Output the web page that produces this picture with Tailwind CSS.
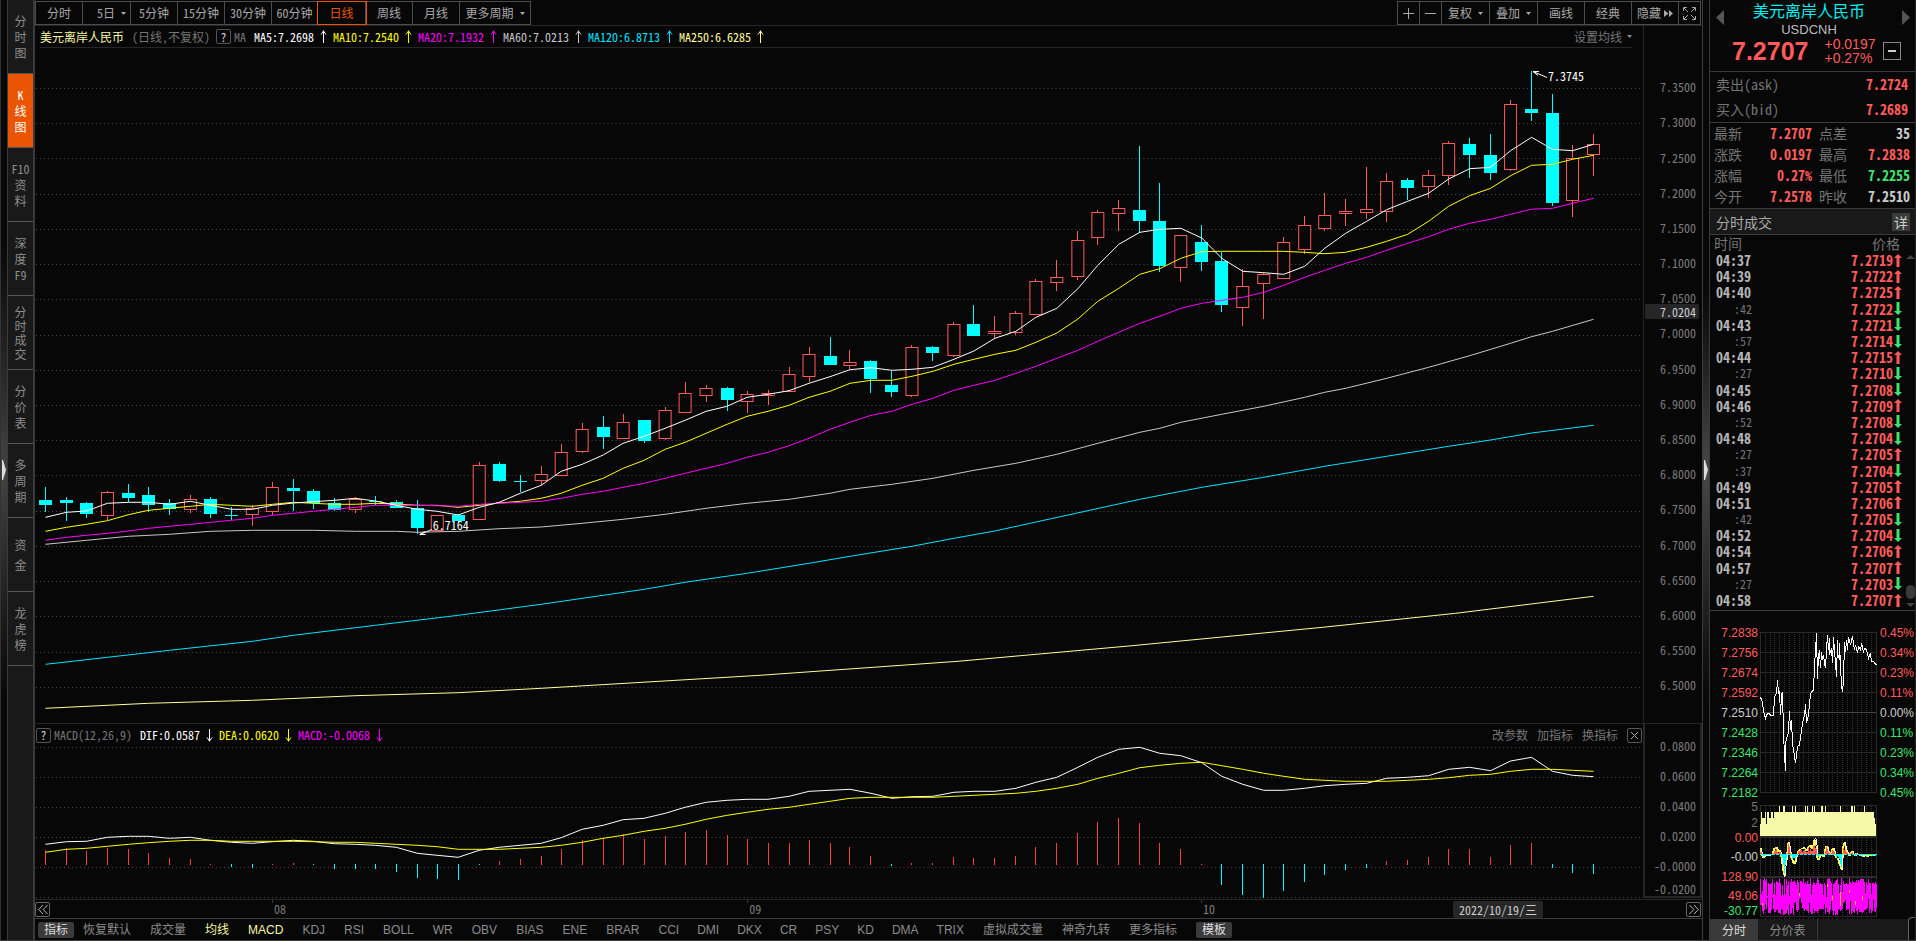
<!DOCTYPE html>
<html lang="zh-CN">
<head>
<meta charset="utf-8">
<title>美元离岸人民币 USDCNH</title>
<script src="https://cdn.jsdelivr.net/npm/@tailwindcss/browser@4"></script>
</head>
<body class="h-screen min-h-[720px] overflow-hidden bg-[#070707] font-['Noto_Sans_CJK_SC',sans-serif] text-[12px] leading-4 text-[#a8a8a8]">
<div class="flex h-full border-b border-[#3a3a3a] [font-feature-settings:'hwid']">

  <!-- left handle -->
  <div class="flex w-[7px] shrink-0 items-center border-l border-[#333] bg-linear-to-b from-[#070707] from-25% via-[#444] via-50% to-[#070707] to-75%">
    <svg class="ml-px h-5 w-1" viewBox="0 0 4 20" fill="#ddd"><path d="M0 0h1L4 10L1 20H0z"/></svg>
  </div>

  <!-- side navigation -->
  <nav class="flex w-7 shrink-0 flex-col border-r-2 border-l border-[#3a3a3a] bg-[#191919] text-[#8c8c8c]" aria-label="视图">
    <button class="h-[74px] border-b border-[#555] text-center leading-4">分<br>时<br>图</button>
    <button class="h-[74px] border-b border-[#555] bg-[#eb5502] text-center leading-4 text-white">K<br>线<br>图</button>
    <button class="h-[74px] border-b border-[#555] text-center leading-4">F10<br>资<br>料</button>
    <button class="h-[74px] border-b border-[#555] text-center leading-4">深<br>度<br>F9</button>
    <button class="h-[74px] border-b border-[#555] text-center leading-[14px]">分<br>时<br>成<br>交</button>
    <button class="h-[74px] border-b border-[#555] text-center leading-4">分<br>价<br>表</button>
    <button class="h-[74px] border-b border-[#555] text-center leading-4">多<br>周<br>期</button>
    <button class="h-[74px] border-b border-[#555] text-center leading-5">资<br>金</button>
    <button class="h-[74px] border-b border-[#555] text-center leading-4">龙<br>虎<br>榜</button>
  </nav>

  <!-- chart side -->
  <main class="flex min-w-0 flex-1 flex-col">
    <div class="flex h-[25px] shrink-0 items-start justify-between pt-px">
      <div class="flex h-6 divide-x divide-[#4c4c4c] border border-[#4c4c4c]">
        <button class="w-[47px]">分时</button>
        <button class="flex w-12 items-center justify-end gap-[6px] pr-1">5日<svg class="h-[3px] w-[5px]" viewBox="0 0 5 3" fill="#a8a8a8"><path d="M0 0h5L2.500 3z"/></svg></button>
        <button class="w-[47px]">5分钟</button>
        <button class="w-[47px]">15分钟</button>
        <button class="w-[47px]">30分钟</button>
        <button class="w-[46px]">60分钟</button>
        <button class="w-12 text-[#eb5502] outline outline-[#eb5502]">日线</button>
        <button class="w-[47px]">周线</button>
        <button class="w-[47px]">月线</button>
        <button class="flex w-[70px] items-center justify-center gap-[6px]">更多周期<svg class="h-[3px] w-[5px]" viewBox="0 0 5 3" fill="#a8a8a8"><path d="M0 0h5L2.500 3z"/></svg></button>
      </div>
      <div class="mr-px flex h-6 divide-x divide-[#4c4c4c] border border-[#4c4c4c]">
        <button class="flex w-[22px] items-center justify-center" aria-label="放大"><svg class="size-[11px]" viewBox="0 0 11 11" stroke="#a8a8a8" shape-rendering="crispEdges"><path d="M0 5.500h11M5.500 0v11"/></svg></button>
        <button class="flex w-[22px] items-center justify-center" aria-label="缩小"><svg class="size-[11px]" viewBox="0 0 11 11" stroke="#a8a8a8" shape-rendering="crispEdges"><path d="M0 5.500h11"/></svg></button>
        <button class="flex w-12 items-center justify-center gap-[6px]">复权<svg class="h-[3px] w-[5px]" viewBox="0 0 5 3" fill="#a8a8a8"><path d="M0 0h5L2.500 3z"/></svg></button>
        <button class="flex w-12 items-center justify-center gap-[6px]">叠加<svg class="h-[3px] w-[5px]" viewBox="0 0 5 3" fill="#a8a8a8"><path d="M0 0h5L2.500 3z"/></svg></button>
        <button class="w-[47px]">画线</button>
        <button class="w-[47px]">经典</button>
        <button class="flex w-[47px] items-center justify-center gap-[3px]">隐藏<svg class="h-[7px] w-[9px]" viewBox="0 0 9 7" fill="#a8a8a8"><path d="M0 0L4.500 3.500L0 7zM5 0L9 3.500L5 7z"/></svg></button>
        <button class="flex w-[21px] items-center justify-center" aria-label="全屏"><svg class="size-[13px]" viewBox="0 0 13 13" fill="none" stroke="#a8a8a8"><path d="M0.500 4V0.500H4M9 0.500h3.500V4M12.500 9v3.500H9M4 12.500H0.500V9M1 1l4 4M12 1L8 5M12 12L8 8M1 12l4-4"/></svg></button>
      </div>
    </div>

    <!-- price chart -->
    <section class="flex min-h-0 flex-1 border-t border-[#262626]">
      <div class="flex min-w-0 flex-1 flex-col border-r border-[#262626]">
        <header class="mr-[11px] ml-[5px] flex h-[22px] shrink-0 items-center border-b border-[#262626] whitespace-nowrap">
          <h1 class="text-[#f6f9a5]">美元离岸人民币</h1>
          <span class="ml-2 w-[84px] text-[#757575]">（日线,不复权）</span>
          <button class="mr-[3px] flex size-[15px] items-center justify-center rounded-[2px] border border-[#555] text-[#ddd]" aria-label="说明">?</button>
          <span class="mr-2 text-[#757575]">MA</span>
          <div id="ma" class="flex items-center"></div>
          <button class="ml-auto flex items-center gap-[5px] text-[#757575]">设置均线<svg class="h-[3px] w-[5px]" viewBox="0 0 5 3" fill="#8c8c8c"><path d="M0 0h5L2.500 3z"/></svg></button>
        </header>
        <svg id="kline" class="min-h-0 w-full flex-1" viewBox="35 48 1609 675" preserveAspectRatio="none" shape-rendering="crispEdges" role="img" aria-label="日K线与均线"></svg>
      </div>
      <div class="relative flex w-[58px] shrink-0 flex-col pr-[6px] text-right text-[#7c7c7c]">
        <div class="grow-[436] basis-0"></div>
        <div id="priceAxis" class="flex grow-[6336] basis-0 flex-col"></div>
        <div class="grow-[201] basis-0"></div>
        <span class="absolute top-[39.900%] left-px h-[15px] w-[54px] rounded-[2px] bg-[#262626] pr-[3px] leading-[15px] text-[#ccc]">7.0204</span>
      </div>
    </section>

    <!-- MACD -->
    <section class="flex h-[177px] shrink-0 border-y border-[#262626]">
      <div class="flex min-w-0 flex-1 flex-col">
        <header class="mr-px flex h-5 shrink-0 items-center pt-[2px] pl-px whitespace-nowrap">
          <button class="mr-[3px] flex size-[15px] items-center justify-center rounded-[2px] border border-[#555] text-[#ddd]" aria-label="说明">?</button>
          <span class="mr-2 text-[#757575]">MACD(12,26,9)</span>
          <div id="macdVals" class="flex items-center"></div>
          <div class="ml-auto flex items-center gap-[9px] text-[#757575]">
            <button>改参数</button><button>加指标</button><button>换指标</button>
            <button class="flex size-[15px] items-center justify-center rounded-[2px] border border-[#555]" aria-label="关闭"><svg class="size-[7px]" viewBox="0 0 7 7" stroke="#a8a8a8"><path d="M0 0l7 7M7 0L0 7"/></svg></button>
          </div>
        </header>
        <svg id="macd" class="min-h-0 w-full flex-1" viewBox="35 744 1609 155" preserveAspectRatio="none" shape-rendering="crispEdges" role="img" aria-label="MACD"></svg>
      </div>
      <div class="mb-px flex w-[59px] shrink-0 flex-col border-2 border-t-0 border-[#262626] pt-[7px] pr-1 text-right text-[#7c7c7c]">
        <span class="h-[30px] leading-[30px]">0.0800</span>
        <span class="h-[30px] leading-[30px]">0.0600</span>
        <span class="h-[30px] leading-[30px]">0.0400</span>
        <span class="h-[30px] leading-[30px]">0.0200</span>
        <span class="h-[30px] leading-[30px]">-0.0000</span>
        <span class="h-4">-0.0200</span>
      </div>
    </section>

    <!-- date row -->
    <div class="relative flex h-[19px] shrink-0 items-center justify-between border-b border-[#3a3a3a] pr-px text-[#7c7c7c]">
      <button class="flex size-[15px] items-center justify-center rounded-[2px] border border-[#666]" aria-label="向前"><svg class="h-[9px] w-[10px]" viewBox="0 0 10 9" fill="none" stroke="#bbb"><path d="M5 0L0.700 4.500L5 9M9.500 0L5.200 4.500L9.500 9"/></svg></button>
      <span class="absolute top-0 left-[14.220%] pl-[2px] leading-[18px] before:absolute before:top-0 before:left-0 before:h-[3px] before:w-px before:bg-[#3a3a3a]">08</span>
      <span class="absolute top-0 left-[42.730%] pl-[2px] leading-[18px] before:absolute before:top-0 before:left-0 before:h-[3px] before:w-px before:bg-[#3a3a3a]">09</span>
      <span class="absolute top-0 left-[69.950%] pl-[2px] leading-[18px] before:absolute before:top-0 before:left-0 before:h-[3px] before:w-px before:bg-[#3a3a3a]">10</span>
      <span class="absolute top-px left-[85.060%] rounded-[2px] bg-[#262626] px-[6px] leading-[17px] text-[#ccc]">2022/10/19/三</span>
      <button class="flex size-[15px] items-center justify-center rounded-[2px] border border-[#666]" aria-label="向后"><svg class="h-[9px] w-[10px]" viewBox="0 0 10 9" fill="none" stroke="#bbb"><path d="M0.500 0L4.800 4.500L0.500 9M5 0L9.300 4.500L5 9"/></svg></button>
    </div>

    <!-- indicator tabs -->
    <div class="flex h-[21px] shrink-0 items-center gap-[19px] pl-[3px] whitespace-nowrap font-['Liberation_Sans','Noto_Sans_CJK_SC',sans-serif] text-[#8c8c8c]">
      <button class="-mr-[10px] rounded-[2px] bg-[#3a3a3a] px-[6px] text-[#ddd]">指标</button>
      <button>恢复默认</button><button>成交量</button><button class="text-[#f6f9a5]">均线</button><button class="text-[#f6f9a5]">MACD</button><button>KDJ</button><button>RSI</button><button>BOLL</button><button>WR</button><button>OBV</button><button>BIAS</button><button>ENE</button><button>BRAR</button>
      <div class="flex gap-[18px]"><button>CCI</button><button>DMI</button><button>DKX</button><button>CR</button><button>PSY</button><button>KD</button><button>DMA</button><button>TRIX</button></div>
      <button>虚拟成交量</button><button>神奇九转</button><button>更多指标</button>
      <button class="rounded-[2px] bg-[#3a3a3a] px-[6px] text-[#ddd]">模板</button>
    </div>
  </main>

  <!-- splitter -->
  <div class="flex w-2 shrink-0 items-center border-x border-[#3a3a3a] bg-linear-to-b from-[#070707] from-30% via-[#484848] via-50% to-[#070707] to-75%">
    <svg class="ml-px h-5 w-1" viewBox="0 0 4 20" fill="#ddd"><path d="M0 0h1L4 10L1 20H0z"/></svg>
  </div>

  <!-- quote panel -->
  <aside class="flex w-[206px] shrink-0 flex-col border-r border-[#262626]">
    <header class="flex h-[72px] shrink-0 border-b border-[#3a3a3a]">
      <button class="mt-[10px] ml-[6px] h-[15px] w-2" aria-label="上一个"><svg class="h-[15px] w-2" viewBox="0 0 8 15" fill="#555"><path d="M8 0v15L0 7.500z"/></svg></button>
      <div class="flex flex-1 flex-col items-center">
        <h2 class="pr-5 text-[16px] leading-5 text-[#00f0f0]">美元离岸人民币</h2>
        <p class="mt-[2px] pr-5 font-['Liberation_Sans',sans-serif] text-[13px] leading-4 text-[#bbb]">USDCNH</p>
        <div class="flex h-[26px] w-full items-center font-['Liberation_Sans',sans-serif] text-[#ff5b5b]">
          <b class="ml-2 text-[25px] leading-[26px]">7.2707</b>
          <div class="ml-4 flex flex-col text-[14px] leading-[14px]"><span>+0.0197</span><span>+0.27%</span></div>
          <button class="ml-[8px] flex size-[18px] shrink-0 items-center justify-center border border-[#888]" aria-label="收起"><svg class="h-[2px] w-2" viewBox="0 0 8 2" fill="#ccc"><path d="M0 0h8v2H0z"/></svg></button>
        </div>
      </div>
      <button class="mt-[10px] mr-[5px] -ml-3 h-[15px] w-2" aria-label="下一个"><svg class="h-[15px] w-2" viewBox="0 0 8 15" fill="#555"><path d="M0 0v15L8 7.500z"/></svg></button>
    </header>
    <div class="h-[51px] shrink-0 border-b border-[#3a3a3a]">
      <table class="w-full text-[14px] leading-[25px] text-[#757575]">
        <tbody>
          <tr><th class="pl-[6px] text-left font-normal">卖出(ask)</th><td class="pr-[7px] text-right font-bold text-[#ff5b5b]">7.2724</td></tr>
          <tr><th class="pl-[6px] text-left font-normal">买入(bid)</th><td class="pr-[7px] text-right font-bold text-[#ff5b5b]">7.2689</td></tr>
        </tbody>
      </table>
    </div>
    <div class="h-[86px] shrink-0 border-b border-[#3a3a3a]">
      <table class="w-full text-[14px] leading-[21px] text-[#757575]">
        <tbody>
          <tr><th class="w-8 pl-1 text-left font-normal">最新</th><td class="w-[70px] text-right font-bold text-[#ff5b5b]">7.2707</td><th class="w-9 pl-[7px] text-left font-normal">点差</th><td class="pr-[5px] text-right font-bold text-[#ccc]">35</td></tr>
          <tr><th class="pl-1 text-left font-normal">涨跌</th><td class="text-right font-bold text-[#ff5b5b]">0.0197</td><th class="pl-[7px] text-left font-normal">最高</th><td class="pr-[5px] text-right font-bold text-[#ff5b5b]">7.2838</td></tr>
          <tr><th class="pl-1 text-left font-normal">涨幅</th><td class="text-right font-bold text-[#ff5b5b]">0.27%</td><th class="pl-[7px] text-left font-normal">最低</th><td class="pr-[5px] text-right font-bold text-[#3ce46c]">7.2255</td></tr>
          <tr><th class="pl-1 text-left font-normal">今开</th><td class="text-right font-bold text-[#ff5b5b]">7.2578</td><th class="pl-[7px] text-left font-normal">昨收</th><td class="pr-[5px] text-right font-bold text-[#ccc]">7.2510</td></tr>
        </tbody>
      </table>
    </div>
    <div class="flex h-[26px] shrink-0 items-center justify-between border-b border-[#3a3a3a] bg-[#191919] pr-[5px] pl-[6px] text-[14px]">
      <h3>分时成交</h3><button class="size-[18px] bg-[#3a3a3a] leading-[18px] text-[#ccc]">详</button>
    </div>
    <div class="flex h-[17px] shrink-0 items-center justify-between pr-[15px] pb-[2px] pl-1 text-[14px] text-[#757575]"><span>时间</span><span>价格</span></div>
    <div class="flex min-h-0 flex-1 border-b border-[#3a3a3a]">
      <ol id="ticks" class="flex flex-1 flex-col pb-[2px]"></ol>
      <div class="flex w-[10px] flex-col items-center justify-end pb-[3px]">
        <svg class="mt-[3px] mb-auto h-1 w-[9px]" viewBox="0 0 9 4" fill="#444"><path d="M4.500 0L9 4H0z"/></svg>
        <div class="mb-1 h-[14px] w-[9px] rounded-full bg-[#3a3a3a]"></div>
        <svg class="h-1 w-[9px]" viewBox="0 0 9 4" fill="#444"><path d="M0 0h9L4.500 4z"/></svg>
      </div>
    </div>
    <div class="flex h-[308px] shrink-0 overflow-hidden font-['Liberation_Sans',sans-serif] text-[12px] leading-[14px]">
      <div class="flex w-12 flex-col pt-[15px] text-right">
        <div class="flex flex-col gap-[6px] text-[#ff5b5b]"><span>7.2838</span><span>7.2756</span><span>7.2674</span><span>7.2592</span><span class="text-[#ccc]">7.2510</span><span class="text-[#3ce46c]">7.2428</span><span class="text-[#3ce46c]">7.2346</span><span class="text-[#3ce46c]">7.2264</span><span class="text-[#3ce46c]">7.2182</span></div>
        <span class="text-[#757575]">5</span>
        <span class="mt-[2px] text-[#757575]">2</span>
        <span class="mt-px text-[#ff5b5b]">0.00</span>
        <span class="mt-[5px] text-[#ccc]">-0.00</span>
        <span class="mt-[6px] text-[#ff5b5b]">128.90</span>
        <span class="mt-[5px] text-[#ff5b5b]">49.06</span>
        <span class="mt-px text-[#3ce46c]">-30.77</span>
      </div>
      <svg id="mini" class="ml-[2px] h-[308px] w-[117px] shrink-0" viewBox="0 0 117 308" shape-rendering="crispEdges" role="img" aria-label="分时走势"></svg>
      <div class="ml-[3px] flex flex-col gap-[6px] pt-[15px] text-[#ff5b5b]"><span>0.45%</span><span>0.34%</span><span>0.23%</span><span>0.11%</span><span class="text-[#ccc]">0.00%</span><span class="text-[#3ce46c]">0.11%</span><span class="text-[#3ce46c]">0.23%</span><span class="text-[#3ce46c]">0.34%</span><span class="text-[#3ce46c]">0.45%</span></div>
    </div>
    <div class="flex h-[21px] shrink-0 bg-[#191919]">
      <button class="w-12 bg-[#3a3a3a] text-[#ddd]">分时</button>
      <button class="w-[60px] border-r border-[#3a3a3a] text-[#8c8c8c]">分价表</button>
      <div class="mt-[-2px] ml-auto w-[7px] rounded-tl-[4px] border-t border-l border-[#666] bg-[#070707]"></div>
    </div>
  </aside>
</div>

<script>
const $ = id => document.getElementById(id);

/* legends */
const arrow = (up, c) => `<svg class="mx-[5px] h-[13px] w-[9px]" viewBox="0 0 9 13" fill="none" stroke="${c}"><path d="${up ? 'M4.500 0.500V13M2 4.500L4.500 1L7 4.500' : 'M4.500 0V12.500M2 8.500L4.500 12L7 8.500'}"/></svg>`;
const legend = (items, up) => items.map(([t, c]) => `<span style="color:${c}">${t}</span>${arrow(up, c)}`).join('');
$('ma').innerHTML = legend([['MA5:7.2698', '#ffffff'], ['MA10:7.2540', '#ffff00'], ['MA20:7.1932', '#ff00ff'], ['MA60:7.0213', '#c8c8c8'], ['MA120:6.8713', '#00e5ff'], ['MA250:6.6285', '#ffff99']], true);
$('macdVals').innerHTML = legend([['DIF:0.0587', '#ffffff'], ['DEA:0.0620', '#ffff00'], ['MACD:-0.0068', '#ff00ff']], false);

/* price axis */
let axis = '';
for (let k = 0; k < 18; k++) axis += `<span class="flex flex-1 basis-0 items-center justify-end">${(7.35 - k * 0.05).toFixed(4)}</span>`;
$('priceAxis').innerHTML = axis;

/* candles: kind, high, body top, body bottom, low */
const X = i => Math.round(45 + i * 20.653);
const early = `c501,540,555,576 c531,540,549,603 c546,549,582,594 r513,517,584,601 c492,519,534,547 c501,525,555,576 c537,549,567,585 r525,538,566,579 c531,537,582,594 c561,586,588,600 r555,565,581,618 r486,502,572,586 c477,504,513,573 c507,513,549,567 c534,549,570,573 r531,538,566,579 c528,543,547,555 c540,546,564,564 c540,564,624,642 r585,586,631,633 c582,585,603,609 r426,436,596,600 c426,432,483,486 c465,483,486,516 r438,463,479,495 r372,397,464,467 r309,328,392,399 c288,321,351,387 r282,307,353,357 c300,300,363,369 r261,271,353,360 r186,220,275,279 r195,205,224,246 c201,204,240,273 r213,223,242,279 r210,220,224,256 r141,163,214,216 r81,103,167,186 c51,108,135,135 r90,127,134,148 c120,123,177,219 c153,195,216,231 r75,82,224,231 c78,81,99,123 r6,13,104,111`.split(' ');
const late = `c615,672,708,708 r648,694,698,717 r633,640,695,705 r537,544,641,645 r480,532,545,573 r393,421,527,540 r330,337,410,435 r300,325,338,393 c138,330,363,399 c249,363,498,516 r405,406,500,546 c375,426,486,513 c456,483,615,636 r507,559,620,678 r519,521,548,657 r411,427,533,537 r348,376,446,462 r279,346,383,393 r297,334,338,378 r201,328,335,357 r219,244,332,366 c234,240,264,300 r210,226,257,294 r123,130,224,255 c114,132,165,234 c102,165,219,240 r0,13,206,213 c-87,27,39,63 c-18,39,309,318 r135,175,299,351 r102,133,161,228`.split(' ');
const candles = [...early.map(s => [s, 320]), ...late.map(s => [s, 100])];

const line = (pts, c) => `<polyline fill="none" stroke="${c}" stroke-width="1" points="${pts.map(([x, y]) => x + '.5,' + y.toFixed(1)).join(' ')}"/>`;
const seq = (str, base, from = 0) => str.split(',').map((v, k) => [X(from + k), base + v / 3]);
const sparse = (str, base) => str.split(' ').map(s => { const [i, v] = s.split(':'); return [X(+i), base + v / 3]; });
const grid = ys => ys.map(y => `<path d="M36 ${y}.5H1644" stroke="#4e4e4e" stroke-dasharray="1 3"/>`).join('');

let k = grid([88, 123, 158, 194, 229, 264, 299, 335, 370, 405, 440, 475, 511, 546, 581, 616, 652, 687]);
candles.forEach(([s, base], i) => {
  const [h, t, b, l] = s.slice(1).split(',').map(v => Math.round(base + v / 3)), x = X(i);
  if (s[0] === 'c') k += `<rect x="${x}" y="${h}" width="1" height="${l - h}" fill="#00ffff"/><rect x="${x - 6}" y="${t}" width="13" height="${Math.max(1, b - t)}" fill="#00ffff"/>`;
  else k += `<rect x="${x}" y="${h}" width="1" height="${Math.max(0, t - h)}" fill="#ff5b5b"/><rect x="${x}" y="${b}" width="1" height="${Math.max(0, l - b)}" fill="#ff5b5b"/><rect x="${x - 5.5}" y="${t + .5}" width="12" height="${Math.max(1, b - t)}" fill="#070707" stroke="#ff5b5b"/>`;
});
k += line([...sparse('0:145 5:130 10:121 15:107 20:98 24:85', 660), ...sparse('34.6:286 44.2:244 52.5:198 61.9:142 68.3:100 75:49', 580)], '#ffff99');
k += line([...sparse('0:1033 3:1012 6:991 10:964 12:946 16:916 20:886 24:853 27:826 29:808 31:787 34:760 37:730 39:709 42:679 44:655 46:633', 320), ...sparse('53:1198 56:1162 59:1132 62:1099 65:1069 68:1039 70:1020 72:999 75:976', 100)], '#00e5ff');
k += line([...sparse('0:673 2:661 4:649 6:643 8:634 10:631 13:631 15:634 17:634 18:637 20:634 22:626 24:621 26:610 28:598 30:583 32:565 34:550 36:538 38:520 39:508 41:493 43:475 45:451', 320), ...sparse('47:1090 49:1063 51:1030 53:997 54:985 55:967 57:943 59:919 61:892 62:877 63:865 65:835 67:802 69:767 71:730 72:710 73:694 75:658', 100)], '#c8c8c8');
k += line([...seq('634,622,613,602,584,571,565,559,553,556,559,553,547,550,553,553,550,552,556,556,562,556,549,544,535,520,496,475,445,421,388,367,340,313,289,274,256,232,214,190,181,181,169,154,133', 320), ...seq('778,763,751,727,699,657,604,565,523,506,475,455,454,454,454,454,457,461,457,442,424,403,364,319,287,265,227,196,193,178,166', 100, 45)], '#ffff00');
k += line([...seq('661,652,646,640,633,625,619,613,607,601,595,586,580,574,568,562,556,556,556,557,559,553,550,547,544,535,523,514,502,490,475,460,445,430,412,397,377,355,328,307,286,274,253,235,211', 320), ...seq('856,841,820,799,775,751,724,697,670,649,625,610,601,592,577,556,532,511,490,472,451,430,410,388,370,358,343,328,325,310,295', 100, 45)], '#ff00ff');
k += line([...seq('592,577,573,550,547,547,553,544,556,568,568,556,549,545,541,535,543,556,568,574,585,562,547,520,496,454,433,405,370,349,325,301,274,259,232,223,212,190,170,149,143,151,148,142,118', 320), ...seq('753,715,694,652,625,566,496,433,397,388,385,414,475,514,518,523,499,445,400,364,329,304,280,237,206,202,152,112,148,152,133', 100, 45)], '#ffffff');
k += `<g fill="#fff" stroke="#fff"><path d="M1534 71.500L1548 77.500M1534 71.500l6 0M1534 71.500l5 4"/><path d="M420 534.500L432 529.500M420 534.500l6 0M420 534.500l5 -3"/></g>
<text x="1549" y="81" fill="#fff" font-size="12">7.3745</text><text x="433" y="530" fill="#fff" font-size="12">6.7164</text>`;
$('kline').innerHTML = k;

/* MACD */
let m = grid([747, 777, 807, 837, 867, 897]);
const bars = [
  ...'570,564,573,564,567,579,594,597,612,-621,-624,612,609,-615,-627,-627,-627,-636,-654,-657,-660,-615,603,597,588'.split(',').map(v => [v, 660]),
  ...'387,360,354,342,357,348,336,330,345,357,369,369,360,369,381,408,-438,429,429,411,414,414,408,381,369,339,306,294'.split(',').map(v => [v, 720]),
  ...'429,489,507,551,-615,-645,-654,-633,-606,-585,-570,-564,543,540,531,507,507,531,495,489,-564,-579,-582'.split(',').map(v => [v, 680])];
bars.forEach(([v, base], i) => {
  const y = Math.round(base + Math.abs(v) / 3);
  m += v < 0 ? `<rect x="${X(i)}" y="864" width="1" height="${Math.max(1, y - 864)}" fill="#00ffff"/>` : `<rect x="${X(i)}" y="${y}" width="1" height="${Math.max(1, 865 - y)}" fill="#ff3c3c"/>`;
});
m += line([...seq('553,545,544,532,529,529,535,532,541,547,550,545,541,544,551,553,556,562,580,586,592,571,562,556,550', 660), ...seq('353,328,316,299,295,280,262,247,241,238,238,229,214,211,208,220,235,230,229,217,214,214,205,187,172,142,112,88', 720, 25), ...seq('202,220,227,248,289,313,331,331,325,317,313,310,295,292,287,268,262,272,243,232,274,286,290', 680, 53)], '#ffffff');
m += line([...seq('577,568,565,559,553,548,544,541,541,544,544,544,544,545,547,547,550,553,556,560,568,568,568,565,562', 660), ...seq('376,367,355,346,334,325,313,298,286,277,268,262,253,244,235,232,232,232,232,229,226,223,220,214,205,193,175,160', 720, 25), ...seq('263,256,250,247,257,268,280,289,298,301,304,304,304,301,298,293,286,283,274,268,268,271,274', 680, 53)], '#ffff00');
$('macd').innerHTML = m;

/* tick list */
const tickData = '04:37 19u,04:39 22u,04:40 25u,:42 22d,04:43 21d,:57 14d,04:44 15u,:27 10d,04:45 08d,04:46 09u,:52 08d,04:48 04d,:27 05u,:37 04d,04:49 05u,04:51 06u,:42 05d,04:52 04d,04:54 06u,04:57 07u,:27 03d,04:58 07u';
$('ticks').innerHTML = tickData.split(',').map(r => {
  const [t, p] = r.split(' '), up = p[2] === 'u';
  const time = t[0] === ':' ? `<span class="w-9 text-right text-[12px] font-normal text-[#757575]">${t}</span>` : `<span class="w-9 text-[#b4b4b4]">${t}</span>`;
  return `<li class="flex flex-1 basis-0 items-center pl-[6px] text-[14px] font-bold">${time}<span class="ml-auto text-[#ff5b5b]">7.27${p.slice(0, 2)}</span>` +
    (up ? '<svg class="mr-[3px] ml-px h-[13px] w-2" viewBox="0 0 8 13" fill="#ff5b5b"><path d="M4 0L8 4H5.500V13H2.500V4H0z"/></svg>' : '<svg class="mr-[3px] ml-px h-[13px] w-2" viewBox="0 0 8 13" fill="#3ce46c"><path d="M4 13L8 9H5.500V0H2.500V9H0z"/></svg>') + '</li>';
}).join('');

/* intraday miniature */
let seed = 7;
const rnd = () => (seed = (seed * 16807) % 2147483647) / 2147483647;
let g = '';
for (let i = 1; i < 24; i++) { const x = Math.round(i * 4.83) + .5; g += `<path d="M${x} 21V181M${x} 195V337" stroke="#333" stroke-dasharray="1 1"/>`; }
for (let i = 0; i < 9; i++) g += `<path d="M0 ${21 + i * 20}.500H117" stroke="${i === 4 ? '#444' : '#2a2a2a'}"/>`;
g += '<path d="M0.500 21V181.500M116.500 21V181.500M0 194.500H117M0.500 194V305M116.500 194V305M0 305.500H117" fill="none" stroke="#2a2a2a"/>';
const trace = '361,292 366,305 369,335 374,354 378,345 384,340 390,345 400,345 402,290 407,280 410,240 413,280 418,275 419,345 424,285 427,275 430,400 431,465 434,512 436,430 443,395 446,332 449,390 454,360 457,430 462,470 465,490 470,440 478,435 485,370 492,345 494,313 499,370 505,345 510,280 518,270 522,200 527,100 531,238 533,160 535,195 537,150 539,205 543,155 545,180 549,165 552,190 555,205 558,150 560,105 563,150 566,115 568,165 572,145 576,190 579,110 582,150 587,230 590,120 592,160 596,180 598,130 602,260 605,275 609,240 611,125 615,155 618,120 620,150 624,110 630,135 637,108 641,150 645,135 650,160 654,140 660,150 664,130 668,155 672,145 678,150 685,175 690,160 692,185 700,185 707,195';
const tracePoints = trace.split(' ').map(p => { const [x, y] = p.split(','); return Math.round((x - 360) / 3) + '.5,' + (y / 3 - 11).toFixed(1); }).join(' ');
g += `<polyline fill="none" stroke="#fff" stroke-width="1" points="${tracePoints}"/>`;
/* volume */
g += '<path fill="#f6f9a5" d="M0 225V213H1V201H2V207H5V201H6V213H7V201H9V207H11V201H13V207H14V201H114V207H115V213H116V225z"/>';
[19, 23, 24, 32, 35, 45, 47, 52, 54, 61, 62, 65, 80, 91, 92, 94, 104].forEach(x => g += `<rect x="${x}" y="195" width="1" height="6" fill="#f6f9a5"/>`);
g += '<path d="M0 226H117M0 265.500H117" stroke="#2a2a2a" stroke-width="2"/>';
/* oscillator */
const osc = [6, 2, -2, -4, -3, -2, -1, -1, -1, -1, -1, 0, 0, 3, 6, 6, 7, 5, 2, 4, 2, -3, -10, -18, -22, -12, -6, 2, 12, 8, 2, -4, -6, -9, -10, -8, -3, 0, 3, 4, 5, 5, 6, 6, 6, 5, 3, 4, 7, 8, 9, 6, 5, 9, 15, 15, 9, -4, -6, -4, -2, 0, -2, -3, 0, 5, 8, 7, 3, 1, -1, 2, 5, 6, 3, -2, -4, -4, -6, -10, -13, -16, -4, 8, 12, 8, 4, 2, 0, -2, 1, 2, 3, 0, -1, -2, 1, 0, -1, -1, -2, 0, -1, -3, -2, -1, -1, -3, -2, -1, -2, -1, -2, -1, -1, -2];
g += `<polyline fill="none" stroke="#fff" points="${osc.map((v, x) => x + 1 + ',' + (243 - v * 1.02)).join(' ')}"/><polyline fill="none" stroke="#ffff00" points="${osc.map((v, x) => x + ',' + (243 - v * 0.95)).join(' ')}"/>`;
osc.forEach((v, x) => { const h = Math.round(Math.abs(v) * (0.3 + rnd() * 0.6)); g += v > 0 ? `<rect x="${x}" y="${243 - h}" width="1" height="${h}" fill="#ff5b5b"/>` : `<rect x="${x}" y="243" width="1" height="${Math.max(1, h)}" fill="#00ffff"/>`; });
g += '<path d="M0 243.500H117" stroke="#00ffff" stroke-dasharray="3 1"/>';
/* KDJ band */
for (let x = 0; x < 117; x++) {
  const t = Math.round(267 + rnd() * 7 + (rnd() > .85 ? 12 : 0)), b = Math.round(304 - rnd() * 7 - (rnd() > .85 ? 10 : 0));
  g += `<rect x="${x}" y="${t}" width="1" height="${b - t}" fill="#ff00ff"/>`;
}
g += '<path stroke="#ffb000" d="M39.500 282v3M67.500 273v3M72.500 285v4M80.500 281v14M89.500 279v3M95.500 290v4M102.500 285v4M2.500 292v3"/>';
$('mini').innerHTML = g;
</script>
</body>
</html>
